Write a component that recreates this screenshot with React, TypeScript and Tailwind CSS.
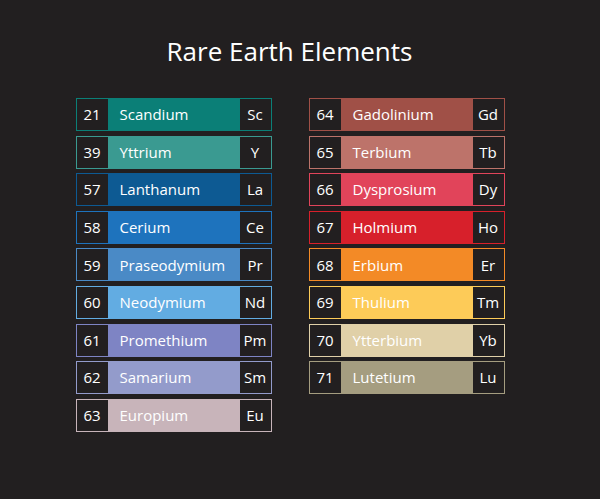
const left = [
  ["21", "Scandium", "Sc", "#0b7f77"],
  ["39", "Yttrium", "Y", "#3a9a91"],
  ["57", "Lanthanum", "La", "#0d5a93"],
  ["58", "Cerium", "Ce", "#1e73bd"],
  ["59", "Praseodymium", "Pr", "#4a8ac6"],
  ["60", "Neodymium", "Nd", "#62ace2"],
  ["61", "Promethium", "Pm", "#7e84c4"],
  ["62", "Samarium", "Sm", "#939bcb"],
  ["63", "Europium", "Eu", "#c8b4ba"],
];
const right = [
  ["64", "Gadolinium", "Gd", "#a05047"],
  ["65", "Terbium", "Tb", "#bd736a"],
  ["66", "Dysprosium", "Dy", "#e1445a"],
  ["67", "Holmium", "Ho", "#d7202b"],
  ["68", "Erbium", "Er", "#f38a26"],
  ["69", "Thulium", "Tm", "#fdcb58"],
  ["70", "Ytterbium", "Yb", "#e0d0a8"],
  ["71", "Lutetium", "Lu", "#a59d80"],
];

const Row = ({ r }: { r: string[] }) => (
  <div className="flex h-[33px] w-[196px] border" style={{ borderColor: r[3] }}>
    <div className="w-[31px] flex items-center justify-center">{r[0]}</div>
    <div className="flex-1 flex items-center pl-3" style={{ background: r[3] }}>{r[1]}</div>
    <div className="w-[31px] flex items-center justify-center">{r[2]}</div>
  </div>
);

export default function App() {
  return (
    <div className="w-[600px] h-[499px] bg-[#221f20] text-white text-[15px] flex flex-col items-center" style={{ fontFamily: '"Open Sans", sans-serif' }}>
      <h1 className="mt-[33px] text-[26px] leading-[36px] ml-[-21px]">Rare Earth Elements</h1>
      <div className="mt-[29px] flex gap-[37px] ml-[-20px]">
        <div className="flex flex-col gap-[4.6px]">{left.map((r) => <Row key={r[0]} r={r} />)}</div>
        <div className="flex flex-col gap-[4.6px]">{right.map((r) => <Row key={r[0]} r={r} />)}</div>
      </div>
    </div>
  );
}
